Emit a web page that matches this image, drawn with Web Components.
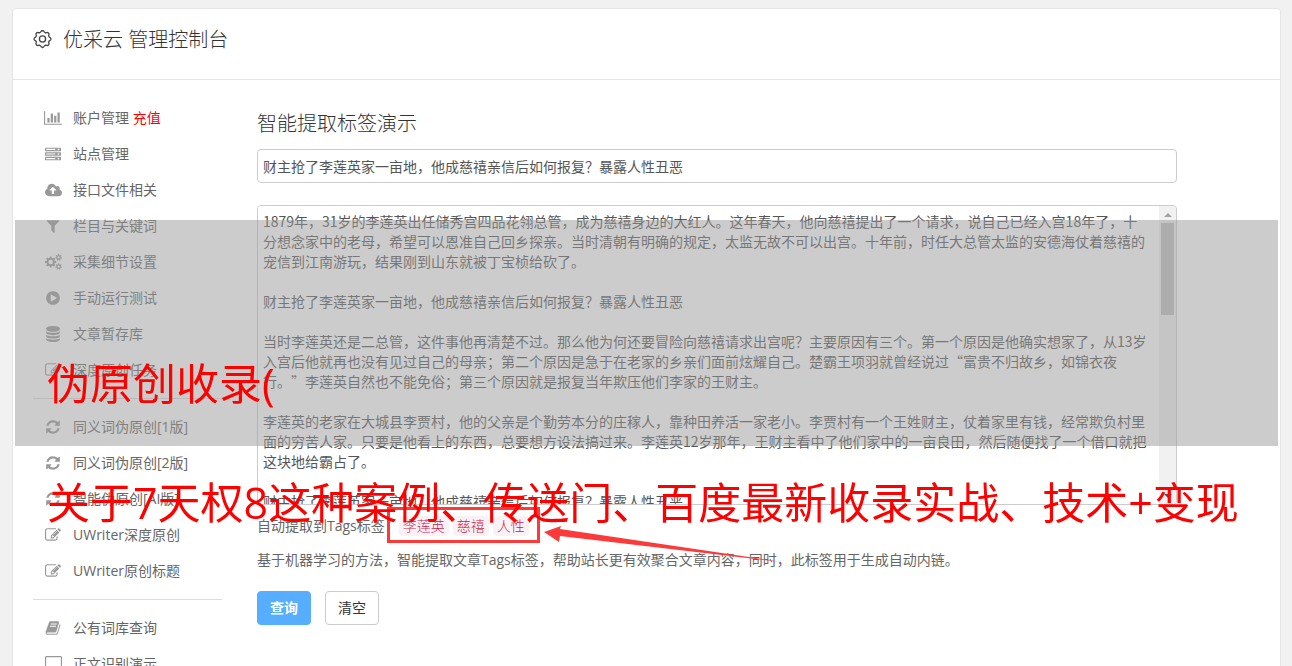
<!DOCTYPE html>
<html lang="zh-CN">
<head>
<meta charset="utf-8">
<title>优采云 管理控制台</title>
<style>
  body {
    margin: 0;
    position: relative;
    background: #f1f1f1;
    color: #666;
    font: 14px/20px "Open Sans", "Noto Sans CJK SC", sans-serif;
    text-spacing-trim: space-all;
    overflow-x: hidden;
  }
</style>
</head>
<body>
<console-card>
  <line-icon slot="icon" name="gear"></line-icon>
  <span slot="title">优采云 管理控制台</span>
  <side-nav slot="nav">
    <nav-item icon="chart">账户管理 <span style="color:#f00">充值</span></nav-item>
    <nav-item icon="server">站点管理</nav-item>
    <nav-item icon="upload">接口文件相关</nav-item>
    <nav-item icon="filter">栏目与关键词</nav-item>
    <nav-item icon="cogs">采集细节设置</nav-item>
    <nav-item icon="play">手动运行测试</nav-item>
    <nav-item icon="database">文章暂存库</nav-item>
    <nav-item icon="edit">深度原创任务</nav-item>
    <hr>
    <nav-item icon="refresh">同义词伪原创[1版]</nav-item>
    <nav-item icon="refresh">同义词伪原创[2版]</nav-item>
    <nav-item icon="refresh">智能伪原创[AI版]</nav-item>
    <nav-item icon="edit">UWriter深度原创</nav-item>
    <nav-item icon="edit">UWriter原创标题</nav-item>
    <hr>
    <nav-item icon="book">公有词库查询</nav-item>
    <nav-item icon="desktop">正文识别演示</nav-item>
  </side-nav>
  <tag-demo></tag-demo>
</console-card>
<promo-overlay>
  <span slot="first">伪原创收录(</span>
  <span slot="second">关于7天权8这种案例、传送门、百度最新收录实战、技术+变现</span>
</promo-overlay>

<script>
/* Closed gear outline around (cx, cy) with n square teeth. */
function gearPath(cx, cy, outer, inner, n) {
  const pts = [];
  for (let i = 0; i < n; i++) {
    const a = i * 2 * Math.PI / n, s = Math.PI / n;
    [[-0.62, inner], [-0.4, outer], [0.4, outer], [0.62, inner]].forEach(([k, r]) =>
      pts.push((cx + r * Math.sin(a + k * s)).toFixed(1) + ' ' + (cy - r * Math.cos(a + k * s)).toFixed(1)));
  }
  return 'M' + pts.join('L') + 'Z';
}
function circlePath(cx, cy, r) {
  return `M${cx - r} ${cy}a${r} ${r} 0 1 0 ${2 * r} 0a${r} ${r} 0 1 0 ${-2 * r} 0z`;
}
/* Rounded-tooth outline: each tooth is a bump drawn between two narrow valleys. */
function scallopPath(cx, cy, valley, peak, n) {
  const at = (r, a) => (cx + r * Math.sin(a)).toFixed(2) + ' ' + (cy - r * Math.cos(a)).toFixed(2);
  const step = 2 * Math.PI / n;
  let d = 'M' + at(valley, -step / 2);
  for (let i = 0; i < n; i++) {
    const a = i * step;
    d += `C${at(valley, a - step * 0.25)} ${at(peak, a - step * 0.3)} ${at(peak, a)}`;
    d += `C${at(peak, a + step * 0.3)} ${at(valley, a + step * 0.25)} ${at(valley, a + step / 2)}`;
  }
  return d + 'Z';
}
const fill = (w, d) => `<svg viewBox="0 0 ${w} 1792" width="${Math.round(w / 112)}" height="16" fill="currentColor" fill-rule="evenodd"><path d="${d}"/></svg>`;
const unit = y => `M64 ${y}h1664q64 0 64 64v256q0 64-64 64h-1664q-64 0-64-64v-256q0-64 64-64zM128 ${y + 128}v128h1024v-128zM1504 ${y + 192}m-96 0a96 96 0 1 0 192 0a96 96 0 1 0-192 0z`;
const ICONS = {
  gear: `<svg viewBox="0 0 20 20" width="20" height="20" fill="none" stroke="#444" stroke-width="1.3" stroke-linejoin="round"><path d="${scallopPath(9.5, 9, 6.9, 8.5, 8)}"/><circle cx="9.5" cy="9" r="3.1"/></svg>`,
  chart: fill(2048, 'M640 896v512h-256v-512h256zm384-512v1024h-256v-1024h256zm1024 1152v128h-2048v-1536h128v1408h1920zm-640-896v768h-256v-768h256zm384-384v1152h-256v-1152h256z'),
  server: fill(1792, unit(192) + unit(704) + unit(1216)),
  upload: fill(1920, 'M1280 928q0-14-9-23l-352-352q-9-9-23-9t-23 9l-351 351q-10 12-10 24 0 14 9 23t23 9h224v352q0 13 9.5 22.5t22.5 9.5h192q13 0 22.5-9.5t9.5-22.5v-352h224q13 0 22.5-9.5t9.5-22.5zm640 288q0 159-112.5 271.5t-271.5 112.5h-1088q-185 0-316.5-131.5t-131.5-316.5q0-130 70-240t188-165q-2-30-2-43 0-212 150-362t362-150q156 0 285.5 87t188.5 231q71-62 166-62 106 0 181 75t75 181q0 76-41 138 130 31 213.5 135.5t83.5 238.5z'),
  filter: fill(1792, 'M1595 295q17 41-14 70l-493 493v742q0 42-39 59-13 5-25 5-27 0-45-19l-256-256q-19-19-19-45v-486l-493-493q-31-29-14-70 17-39 59-39h1280q42 0 59 39z'),
  cogs: fill(1920, gearPath(640, 896, 640, 480, 8) + circlePath(640, 896, 256) + gearPath(1536, 384, 384, 256, 7) + circlePath(1536, 384, 128) + gearPath(1536, 1408, 384, 256, 7) + circlePath(1536, 1408, 128)),
  play: fill(1792, 'M896 128q209 0 385.5 103t279.5 279.5 103 385.5-103 385.5-279.5 279.5-385.5 103-385.5-103-279.5-279.5-103-385.5 103-385.5 279.5-279.5 385.5-103zm384 823q32-18 32-55t-32-55l-544-320q-31-19-64-1-32 19-32 56v640q0 37 32 56 16 8 32 8 17 0 32-9z'),
  database: fill(1792, 'M896 768q237 0 443-43t325-127v170q0 69-103 128t-280 93.5-385 34.5-385-34.5-280-93.5-103-128v-170q119 84 325 127t443 43zm0 768q237 0 443-43t325-127v170q0 69-103 128t-280 93.5-385 34.5-385-34.5-280-93.5-103-128v-170q119 84 325 127t443 43zm0-384q237 0 443-43t325-127v170q0 69-103 128t-280 93.5-385 34.5-385-34.5-280-93.5-103-128v-170q119 84 325 127t443 43zm0-1152q208 0 385 34.5t280 93.5 103 128v128q0 69-103 128t-280 93.5-385 34.5-385-34.5-280-93.5-103-128v-128q0-69 103-128t280-93.5 385-34.5z'),
  edit: fill(1792, 'M888 1184l116-116-152-152-116 116v56h96v96h56zm440-720q-16-16-33 1l-350 350q-17 17-1 33t33-1l350-350q17-17 1-33zm80 594v190q0 119-84.5 203.5t-203.5 84.5h-832q-119 0-203.5-84.5t-84.5-203.5v-832q0-119 84.5-203.5t203.5-84.5h832q63 0 117 25 15 7 18 23 3 17-9 29l-49 49q-14 14-32 8-23-6-45-6h-832q-66 0-113 47t-47 113v832q0 66 47 113t113 47h832q66 0 113-47t47-113v-126q0-13 9-22l64-64q15-15 35-7t20 29zm-96-738l288 288-672 672h-288v-288zm444 132l-92 92-288-288 92-92q28-28 68-28t68 28l152 152q28 28 28 68t-28 68z'),
  refresh: fill(1792, 'M1639 1056q0 5-1 7-64 268-268 434.5t-478 166.5q-146 0-282.5-55t-243.5-157l-129 129q-19 19-45 19t-45-19-19-45v-448q0-26 19-45t45-19h448q26 0 45 19t19 45-19 45l-137 137q71 66 161 102t187 36q134 0 250-65t186-179q11-17 53-117 8-23 30-23h192q13 0 22.5 9.5t9.5 22.5zm25-800v448q0 26-19 45t-45 19h-448q-26 0-45-19t-19-45 19-45l138-138q-148-137-349-137-134 0-250 65t-186 179q-11 17-53 117-8 23-30 23h-199q-13 0-22.5-9.5t-9.5-22.5v-7q65-268 270-434.5t480-166.5q146 0 284 55.5t245 156.5l130-129q19-19 45-19t45 19 19 45z'),
  book: fill(1792, 'M1703 478q40 57 18 129l-275 906q-19 64-76.5 107.5t-122.5 43.5h-923q-77 0-148.5-53.5t-99.5-131.5q-24-67-2-127 0-4 3-27t4-37q1-8-3-21.5t-3-19.5q2-11 8-21t16.5-23.5 16.5-23.5q23-38 45-91.5t30-91.5q3-10 .5-30t-.5-28q3-11 17-28t17-23q21-36 42-92t25-90q1-9-2.5-32t.5-28q4-13 22-30.5t22-22.5q19-26 42.5-84.5t27.5-96.5q1-8-3-25.5t-2-26.5q2-8 9-18t18-23 17-21q8-12 16.5-30.5t15-35 16-36 19.5-32 26.5-23.5 36-11.5 47.5 5.5l-1 3q38-9 51-9h761q74 0 114 56t18 130l-274 906q-36 119-71.5 153.5t-128.5 34.5h-869q-27 0-38 15-11 16-1 43 24 70 144 70h923q29 0 56-15.5t35-41.5l300-987q7-22 5-57 38 15 59 43zm-1064 2q-4 13 2 22.5t20 9.5h608q13 0 25.5-9.5t16.5-22.5l21-64q4-13-2-22.5t-20-9.5h-608q-13 0-25.5 9.5t-16.5 22.5zm-83 256q-4 13 2 22.5t20 9.5h608q13 0 25.5-9.5t16.5-22.5l21-64q4-13-2-22.5t-20-9.5h-608q-13 0-25.5 9.5t-16.5 22.5z'),
  desktop: fill(1920, 'M160 0h1600q160 0 160 160v1088q0 160-160 160h-544q0 128 64 256v128h-640v-128q64-128 64-256h-544q-160 0-160-160v-1088q0-160 160-160zM160 128q-32 0-32 32v1088q0 32 32 32h1600q32 0 32-32v-1088q0-32-32-32z')
};

function define(name, html, setup) {
  const tpl = document.createElement('template');
  tpl.innerHTML = html;
  customElements.define(name, class extends HTMLElement {
    constructor() {
      super();
      this.attachShadow({ mode: 'open' }).append(tpl.content.cloneNode(true));
    }
    connectedCallback() { if (setup) setup(this, this.shadowRoot); }
  });
}

define('line-icon', `
<style>:host { display: inline-flex; align-items: center; justify-content: center; width: 20px; height: 20px; } svg { display: block; }</style>
<span aria-hidden="true"></span>`,
(el, root) => { root.querySelector('span').innerHTML = ICONS[el.getAttribute('name')] || ''; });

define('nav-item', `
<style>
  :host { display: block; }
  a { display: flex; align-items: center; gap: 10px; height: 36px; padding-left: 10px; color: #666; text-decoration: none; white-space: nowrap; }
  line-icon { color: #999; }
</style>
<a href="#"><line-icon></line-icon><span><slot></slot></span></a>`,
(el, root) => {
  const icon = document.createElement('line-icon');
  icon.setAttribute('name', el.getAttribute('icon'));
  root.querySelector('line-icon').replaceWith(icon);
});

define('side-nav', `
<style>
  :host { display: block; }
  ::slotted(hr) { height: 1px; margin: 10px 0; border: 0; background: #ddd; }
</style>
<nav aria-label="菜单"><slot></slot></nav>`);

define('console-card', `
<style>
  :host { display: block; box-sizing: border-box; margin: 8px 11px 0 12px; border: 1px solid #e5e5e5; border-radius: 4px; background: #fff; }
  header { display: flex; align-items: center; gap: 10px; height: 62px; padding: 0 20px 8px; border-bottom: 1px solid #e5e5e5; }
  h1 { margin: 0; font-size: 20px; line-height: 30px; font-weight: 300; color: #333; }
  .body { display: grid; grid-template-columns: 189px minmax(0, 1fr); column-gap: 35px; padding: 20px 103px 20px 20px; }
</style>
<header><slot name="icon"></slot><h1><slot name="title"></slot></h1></header>
<div class="body"><slot name="nav"></slot><slot></slot></div>`);

define('scroll-track', `
<style>
  :host { display: flex; flex-direction: column; align-items: center; background: #f1f1f1; }
  .btn { display: flex; align-items: center; justify-content: center; height: 17px; }
  .thumb { width: 13px; height: 92px; background: #c1c1c1; }
  .rest { flex: 1; }
</style>
<span class="btn"><svg width="8" height="4" viewBox="0 0 8 4" fill="#a3a3a3"><path d="M0 4L4 0L8 4z"/></svg></span>
<span class="thumb"></span><span class="rest"></span>
<span class="btn"><svg width="8" height="4" viewBox="0 0 8 4" fill="#505050"><path d="M0 0L4 4L8 0z"/></svg></span>`);

define('tag-label', `
<style>:host { display: inline-block; padding: 0 4px; border-radius: 4px; background: #f9f2f4; color: #c7254e; font-weight: 300; }</style>
<slot></slot>`);

define('tag-demo', `
<style>
  :host { display: block; padding-top: 9px; }
  h2 { margin: 0 0 10px; font-size: 20px; line-height: 30px; font-weight: 300; color: #333; }
  input, textarea { font: 14px/20px "Noto Sans CJK SC", sans-serif; color: #555; }
  input { display: block; box-sizing: border-box; width: 100%; height: 34px; padding: 6px 5px; border: 1px solid #ccc; border-radius: 4px; background: #fff; }
  .area { display: grid; grid-template-columns: minmax(0, 1fr) 17px; box-sizing: border-box; height: 300px; margin-top: 22px; border: 1px solid #ccc; border-radius: 4px; overflow: hidden; }
  textarea { display: block; box-sizing: border-box; width: 100%; height: 100%; margin: 0; padding: 5px 9px 0 5px; border: 0; outline: 0; resize: none; background: #fff; scrollbar-width: none; text-spacing-trim: space-all; }
  .tags { display: flex; align-items: center; margin: 11px 0 0; white-space: nowrap; }
  .marked { position: relative; display: flex; gap: 4px; }
  .frame { position: absolute; inset: -9px -11px -7px -12px; border: 3px solid #fb3a3a; }
  .arrow { position: absolute; left: 145px; top: 9px; }
  .note { margin: 14px 0 21px; }
  .actions { display: flex; gap: 14px; }
  button { height: 34px; width: 54px; padding: 0; border: 1px solid #ccc; border-radius: 4px; background: #fff; color: #333; font: inherit; }
  .primary { border-color: #57adff; background: #57adff; color: #fff; font-weight: 700; }
</style>
<h2><label for="title">智能提取标签演示</label></h2>
<input id="title" type="text" value="财主抢了李莲英家一亩地，他成慈禧亲信后如何报复？暴露人性丑恶">
<div class="area">
<textarea aria-label="正文" spellcheck="false">1879年，31岁的李莲英出任储秀宫四品花翎总管，成为慈禧身边的大红人。这年春天，他向慈禧提出了一个请求，说自己已经入宫18年了，十分想念家中的老母，希望可以恩准自己回乡探亲。当时清朝有明确的规定，太监无故不可以出宫。十年前，时任大总管太监的安德海仗着慈禧的宠信到江南游玩，结果刚到山东就被丁宝桢给砍了。

财主抢了李莲英家一亩地，他成慈禧亲信后如何报复？暴露人性丑恶

当时李莲英还是二总管，这件事他再清楚不过。那么他为何还要冒险向慈禧请求出宫呢？主要原因有三个。第一个原因是他确实想家了，从13岁入宫后他就再也没有见过自己的母亲；第二个原因是急于在老家的乡亲们面前炫耀自己。楚霸王项羽就曾经说过“富贵不归故乡，如锦衣夜行。”李莲英自然也不能免俗；第三个原因就是报复当年欺压他们李家的王财主。

李莲英的老家在大城县李贾村，他的父亲是个勤劳本分的庄稼人，靠种田养活一家老小。李贾村有一个王姓财主，仗着家里有钱，经常欺负村里面的穷苦人家。只要是他看上的东西，总要想方设法搞过来。李莲英12岁那年，王财主看中了他们家中的一亩良田，然后随便找了一个借口就把这块地给霸占了。

财主抢了李莲英家一亩地，他成慈禧亲信后如何报复？暴露人性丑恶
</textarea>
<scroll-track></scroll-track>
</div>
<p class="tags">自动提取到Tags标签：<span class="marked"><tag-label>李莲英</tag-label><tag-label>慈禧</tag-label><tag-label>人性</tag-label><span class="frame"></span><svg class="arrow" width="242" height="42" viewBox="0 0 242 42" fill="#fb3a3a" aria-hidden="true"><path d="M0 7L17 1L16 4L238 37L16 11L15 17z"/></svg></span></p>
<p class="note">基于机器学习的方法，智能提取文章Tags标签，帮助站长更有效聚合文章内容，同时，此标签用于生成自动内链。</p>
<div class="actions"><button class="primary" type="button">查询</button><button type="button">清空</button></div>`);

define('promo-overlay', `
<style>
  :host { position: absolute; top: 220px; left: 15px; right: 14px; pointer-events: none; color: #f00; font-size: 43px; line-height: 60px; white-space: nowrap; }
  .band { box-sizing: border-box; height: 226px; padding: 134px 0 0 32px; background: rgba(153, 153, 153, .5); }
  p { margin: 0; }
  .below { padding: 27px 0 0 32px; }
</style>
<div class="band"><p><slot name="first"></slot></p></div>
<p class="below"><slot name="second"></slot></p>`);
</script>
</body>
</html>
